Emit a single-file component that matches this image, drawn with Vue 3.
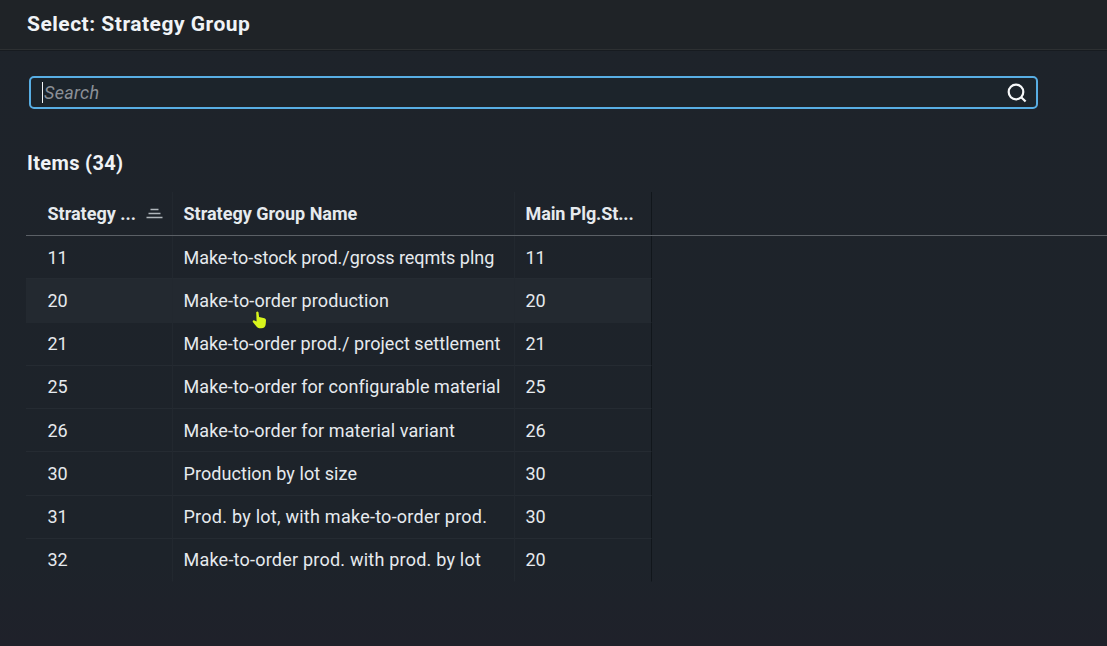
<script setup>
import { ref } from 'vue'

const search = ref('')
const hovered = ref('20')

// tracking is the letter spacing of the name in px
const items = [
  { group: '11', name: 'Make-to-stock prod./gross reqmts plng', main: '11', tracking: -0.03 },
  { group: '20', name: 'Make-to-order production', main: '20', tracking: 0.12 },
  { group: '21', name: 'Make-to-order prod./ project settlement', main: '21', tracking: 0.05 },
  { group: '25', name: 'Make-to-order for configurable material', main: '25', tracking: 0.09 },
  { group: '26', name: 'Make-to-order for material variant', main: '26', tracking: 0.1 },
  { group: '30', name: 'Production by lot size', main: '30', tracking: 0.07 },
  { group: '31', name: 'Prod. by lot, with make-to-order prod.', main: '30', tracking: 0.25 },
  { group: '32', name: 'Make-to-order prod. with prod. by lot', main: '20', tracking: 0.22 },
]
</script>

<template>
  <div class="dialog">
    <header class="dialog-header">
      <h1>Select: Strategy Group</h1>
    </header>

    <div class="search-field">
      <span class="caret"></span>
      <input v-model="search" type="text" placeholder="Search">
      <svg class="search-icon" viewBox="0 0 22 22" width="22" height="22">
        <circle cx="10" cy="10" r="7.3" />
        <path d="M15.2 15.2L19.6 19.5" />
      </svg>
    </div>

    <h2>Items (34)</h2>

    <div class="table">
      <div class="row head">
        <div class="cell first">
          <span class="label">Strategy ...</span>
          <svg class="sort-icon" viewBox="0 0 17 12" width="17" height="12">
            <path d="M4.5 1.5H12.5M2.5 5.5H14.5M0.5 9.5H16.5" />
          </svg>
        </div>
        <div class="cell">Strategy Group Name</div>
        <div class="cell main">Main Plg.St...</div>
        <div class="filler"></div>
      </div>
      <div
        v-for="item in items"
        :key="item.group"
        class="row"
        :class="{ hover: hovered === item.group }"
        @mouseenter="hovered = item.group"
      >
        <div class="cell first">{{ item.group }}</div>
        <div class="cell" :style="{ letterSpacing: item.tracking + 'px' }">{{ item.name }}</div>
        <div class="cell main">{{ item.main }}</div>
      </div>
    </div>

    <svg class="pointer" viewBox="0 0 15 18" width="15" height="18">
      <path d="M4.2 1.2Q5.5 0 6.5 1.3L7.1 6L12.5 7.2Q14 7.6 14 9.2L13.7 13.2Q13.3 17.3 9.3 17.3H7.2Q5.7 17.2 4.7 15.8L0.8 11Q0.3 9.4 2 9.2L4.6 10.6Z" />
    </svg>
  </div>
</template>

<style>
body { margin: 0; background: #1d232a; }
</style>

<style scoped>
.dialog {
  position: relative;
  box-sizing: border-box;
  width: 100%;
  height: 646px;
  overflow: hidden;
  background: linear-gradient(#1e232a 0, #1d232a 560px, #1f212a 646px);
  color: #e6eaee;
  font-family: Roboto, "Liberation Sans", sans-serif;
  font-size: 18px;
}

.dialog-header {
  box-sizing: border-box;
  height: 50px;
  padding: 11px 27px 0;
  background: #1f2327;
  border-bottom: 1px solid #2d3032;
  box-shadow: 0 1px 0 #171b20;
}

h1, h2 { margin: 0; line-height: 26px; font-weight: 700; color: #f0f3f6; }
h1 { font-size: 21px; letter-spacing: 0.5px; }
h2 { margin: 41px 0 0 27px; font-size: 20px; letter-spacing: 0.35px; }

.search-field {
  display: flex;
  align-items: center;
  box-sizing: border-box;
  width: 1009px;
  height: 33px;
  margin: 26px 0 0 29px;
  padding: 0 8px 0 11px;
  border: 2px solid #58aee4;
  border-radius: 5px;
  background: #1c242b;
}
.caret { width: 1px; height: 21px; margin-right: 1px; background: #f4f6f8; }
input {
  flex: 1;
  min-width: 0;
  padding: 0;
  border: 0;
  outline: 0;
  background: transparent;
  color: #e6eaee;
  font: inherit;
  letter-spacing: 0.3px;
}
input::placeholder { color: #8b9097; font-style: italic; opacity: 1; }
.search-icon { fill: none; stroke: #f7f9fa; stroke-width: 2.2; }

.table { margin: 16px 0 0 26px; }
.row {
  display: grid;
  grid-template-columns: 147px 342px 136.5px 1fr;
  height: 43.25px;
}
.cell {
  display: flex;
  align-items: center;
  box-sizing: border-box;
  padding-left: 10.5px;
  border-right: 1px solid #22282f;
  border-bottom: 1px solid #252b32;
  white-space: nowrap;
}
.first { padding-left: 21.5px; }
.main { border-right: 1px solid #11161b; }
.row:last-child .cell { border-bottom-color: transparent; }
.row.hover .cell { background: #232930; border-bottom-color: #232930; }

.head { height: 43px; border-bottom: 1px solid #5b6066; font-weight: 700; }
.head .cell { border-bottom: 0; }
.head .main { letter-spacing: -0.1px; }
.label { width: 98px; }
.sort-icon { fill: none; stroke: #b0b6bb; stroke-width: 1.3; }

/* mouse pointer floats above the table */
.pointer { position: absolute; left: 252px; top: 311px; fill: #d8f51c; }
</style>
